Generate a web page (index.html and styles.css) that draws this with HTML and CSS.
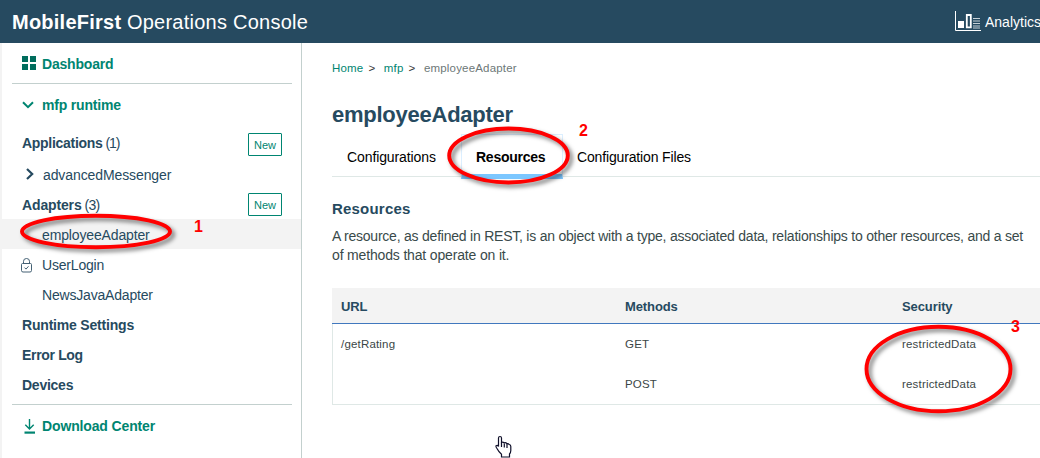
FILE: index.html
```html
<!DOCTYPE html>
<html lang="en">
<head>
<meta charset="utf-8">
<title>MobileFirst Operations Console</title>
<link rel="stylesheet" href="styles.css">
</head>
<body>
<header class="topbar">
  <div class="brand"><b class="brand-bold">MobileFirst</b> <span class="brand-light">Operations Console</span></div>
  <div class="analytics">
    <svg class="analytics-icon" width="27" height="21" viewBox="0 0 27 21"><path d="M.5 0v19.500H26" fill="none" stroke="#fff"/><path d="M3 10h6v7H3z" fill="#fff"/><path d="M11.800 4h4v12.300h-4z" fill="none" stroke="#fff" stroke-width="1.800"/><path d="M18 7.500h7M18 10h7M18 12.500h7M18 15h7M18 17h7" stroke="#c5d0d6"/></svg>
    <span class="analytics-text">Analytics</span>
  </div>
</header>
<div class="layout">
  <nav class="sidebar">
    <a class="row row-dashboard green"><svg class="icon icon-grid" width="14" height="14" viewBox="0 0 14 14"><path d="M0 0h6v6H0zM8 0h6v6H8zM0 8h6v6H0zM8 8h6v6H8z" fill="#006d5d"/></svg><b class="lbl-dashboard">Dashboard</b></a>
    <hr class="rule">
    <a class="row row-runtime green"><svg class="icon icon-down" width="12" height="8" viewBox="0 0 12 8"><path d="M1 1.200l5 5 5-5" fill="none" stroke="#008571" stroke-width="2"/></svg><b class="lbl-runtime">mfp runtime</b></a>
    <div class="row row-apps"><span><b class="lbl-apps">Applications</b> <span class="count count-apps">(1)</span></span><button class="new new-apps">New</button></div>
    <a class="row row-app"><svg class="icon icon-right" width="8" height="12" viewBox="0 0 8 12"><path d="M1 1l5.200 5L1 11" fill="none" stroke="#264a60" stroke-width="2.200"/></svg><span class="lbl-messenger">advancedMessenger</span></a>
    <div class="row row-adapters"><span><b class="lbl-adapters">Adapters</b> <span class="count">(3)</span></span><button class="new">New</button></div>
    <a class="row child selected"><span class="lbl-employee">employeeAdapter</span></a>
    <a class="row low row-lock"><svg class="icon icon-lock" width="11" height="15" viewBox="0 0 11 15"><path d="M1.500 5.500h8a1 1 0 0 1 1 1v6a1.500 1.500 0 0 1-1.500 1.500H2A1.500 1.500 0 0 1 .5 12.500v-6a1 1 0 0 1 1-1zM2.500 5.500V3.300a3 2.800 0 0 1 6 0v2.200M3.500 9.600l1.500 1.500 2.500-2.800" fill="none" stroke="#446174"/></svg><span class="lbl-login">UserLogin</span></a>
    <a class="row low child"><span class="lbl-news">NewsJavaAdapter</span></a>
    <a class="row low"><b class="lbl-settings">Runtime Settings</b></a>
    <a class="row low"><b class="lbl-error">Error Log</b></a>
    <a class="row row-devices"><b class="lbl-devices">Devices</b></a>
    <hr class="rule">
    <a class="row row-download green"><svg class="icon icon-download" width="11" height="15" viewBox="0 0 11 15"><path d="M5.500 0v10M1.300 5.800l4.200 4.200 4.200-4.200" fill="none" stroke="#008571" stroke-width="1.400"/><path d="M.5 12.500h10.500v2.200H.5z" fill="#008571"/></svg><b class="lbl-download">Download Center</b></a>
  </nav>
  <main class="content">
    <div class="crumbs"><a class="green crumb-home">Home</a><span class="sep">&gt;</span><a class="green crumb-mfp">mfp</a><span class="sep">&gt;</span><span class="crumb-here">employeeAdapter</span></div>
    <h1 class="title">employeeAdapter</h1>
    <div class="tabs">
      <div class="tab tab-config"><span>Configurations</span></div>
      <div class="tab tab-active"><span>Resources</span></div>
      <div class="tab tab-files"><span>Configuration Files</span></div>
    </div>
    <h2 class="subtitle">Resources</h2>
    <p class="desc"><span class="desc-first">A resource, as defined in REST, is an object with a type, associated data, relationships to other resources, and a set</span><br>of methods that operate on it.</p>
    <div class="table">
      <div class="tr th"><span>URL</span><span>Methods</span><span>Security</span></div>
      <div class="tr"><span>/getRating</span><span>GET</span><span>restrictedData</span></div>
      <div class="tr"><span></span><span>POST</span><span>restrictedData</span></div>
    </div>
  </main>
</div>
<svg class="marks" width="1040" height="458" viewBox="0 0 1040 458">
  <g class="rings">
    <ellipse cx="96" cy="231.500" rx="74" ry="15.700"/>
    <ellipse cx="508.500" cy="155.500" rx="59.300" ry="27"/>
    <ellipse cx="938.500" cy="369" rx="72" ry="42.300"/>
  </g>
  <g class="mark-text"><text x="194" y="232">1</text><text x="579" y="136">2</text><text x="1011" y="332">3</text></g>
  <path class="hand" d="M498.500 438q0-1.500 1.500-1.500t1.500 1.500v4.500q1.500-.8 2.600.4 1.700-.6 2.800.7 1.500-.3 2.300.9 1.600.2 1.600 2v4q0 2-1.300 3.500v3h-8v-2.700q-2.800-2.500-4.200-5.300-1.900-2.400-1.200-3.300 1.600-.7 2.400.8z"/>
  <path class="hand" d="M501.500 442.500v4.500M504.300 443.500v4M507 444v4"/>
</svg>
</body>
</html>
```
FILE: styles.css
```css
* { box-sizing: border-box; }
body { margin: 0; width: 1040px; height: 458px; overflow: hidden; background: #fff; color: #264a60; font: 14px/18px "Liberation Sans", Arial, sans-serif; }
.topbar { height: 43px; background: #264a60; color: #fff; display: flex; justify-content: space-between; align-items: center; padding-left: 12px; white-space: nowrap; }
.brand { font-size: 20px; line-height: 24px; }
.brand-bold { letter-spacing: .24px; }
.brand-light { letter-spacing: .25px; }
.analytics { display: flex; width: 85px; overflow: hidden; align-items: center; }
.analytics-icon { flex: none; margin-right: 3px; }
.layout { display: flex; height: 415px; }
.sidebar { width: 302px; flex: none; border-left: 2px solid #f3f3f3; border-right: 1px solid #c3d0ce; }
.green { color: #008571; }
.rule { height: 1px; margin: 0 9px 0 10px; border: 0; background: #c3d0ce; }
.row { display: flex; align-items: center; height: 30px; padding: 0 19px 0 20px; white-space: nowrap; }
.icon { flex: none; margin-right: 6px; }
.row-dashboard { height: 40px; padding-top: 2px; }
.icon-grid { margin-top: -2px; }
.row-runtime { height: 42px; }
.icon-down { margin-right: 8px; }
.row-apps { height: 34px; justify-content: space-between; }
.icon-right { margin: -2px 9px 0 4px; }
.row-adapters { height: 29px; justify-content: space-between; }
.new { width: 34px; height: 23px; padding: 0; border: 1px solid #008571; border-radius: 1px; background: #fff; color: #008571; font: 11px/20px "Liberation Sans", Arial, sans-serif; }
.new-apps { margin-top: 3px; }
.child { padding-left: 40px; }
.selected { background: #f3f3f3; padding-top: 2px; }
.low { padding-top: 2px; }
.icon-lock { margin: 0 10px 0 -1px; }
.row-devices { height: 35px; padding-bottom: 3px; }
.row-download { height: 42px; }
.icon-download { margin: 0 7px 0 2px; }
.lbl-dashboard, .lbl-runtime, .lbl-settings, .lbl-news, .lbl-login { letter-spacing: -.19px; }
.lbl-apps { letter-spacing: -.29px; }
.lbl-adapters { letter-spacing: -.14px; }
.count { letter-spacing: -.7px; margin-left: -1px; }
.count-apps { letter-spacing: -1.100px; }
.lbl-messenger { letter-spacing: -.1px; }
.lbl-employee, .lbl-download { letter-spacing: -.14px; }
.lbl-error { letter-spacing: -.33px; }
.lbl-devices { letter-spacing: -.25px; }
.content { width: 738px; flex: none; padding: 17px 0 0 30px; }
.crumbs { display: flex; font-size: 11.5px; line-height: 16px; letter-spacing: .18px; }
.sep { color: #333; margin: 0 8.500px 0 5px; }
.crumb-here { color: #6d7777; }
.title { margin: 25px 0 0; font-size: 22px; line-height: 28px; letter-spacing: -.25px; }
.tabs { display: flex; height: 43px; margin-top: 5px; border-bottom: 1px solid #dfe8e6; color: #000; }
.tab { display: flex; align-items: center; height: 45px; letter-spacing: -.15px; }
.tab-config { width: 129px; padding-left: 15px; letter-spacing: -.1px; }
.tab-active { width: 102px; padding: 4px 0 0 14px; border: 1px solid #dcefff; border-bottom: 5px solid #7cc7ff; font-weight: bold; letter-spacing: -.25px; }
.tab-files { padding-left: 14px; }
.subtitle { margin: 22px 0 0; font-size: 15px; line-height: 20px; letter-spacing: .2px; }
.desc { margin: 8px 0 0; line-height: 19px; letter-spacing: -.16px; color: #394a4a; white-space: nowrap; }
.desc-first { letter-spacing: -.225px; }
.table { margin-top: 23px; height: 117px; border-left: 1px solid #dfe8e6; border-bottom: 1px solid #dfe8e6; font-size: 11.5px; letter-spacing: .18px; color: #3b4646; }
.tr { display: grid; grid-template-columns: 284px 277px 1fr; align-items: center; height: 40px; padding-left: 8px; }
.th { height: 36px; margin-left: -1px; padding: 2px 0 0 9px; background: #f3f3f3; border-bottom: 1px solid #4178be; color: #264a60; font-size: 13px; font-weight: bold; letter-spacing: -.1px; }
.marks { position: absolute; left: 0; top: 0; }
.rings { fill: none; stroke: #f00; stroke-width: 3.9; filter: drop-shadow(3px 3px 2px rgba(0,0,0,.5)); }
.mark-text { fill: #f00; font: bold 16px "Liberation Sans", Arial, sans-serif; }
.hand { fill: #fff; stroke: #10102a; stroke-width: 1.200; }
```
